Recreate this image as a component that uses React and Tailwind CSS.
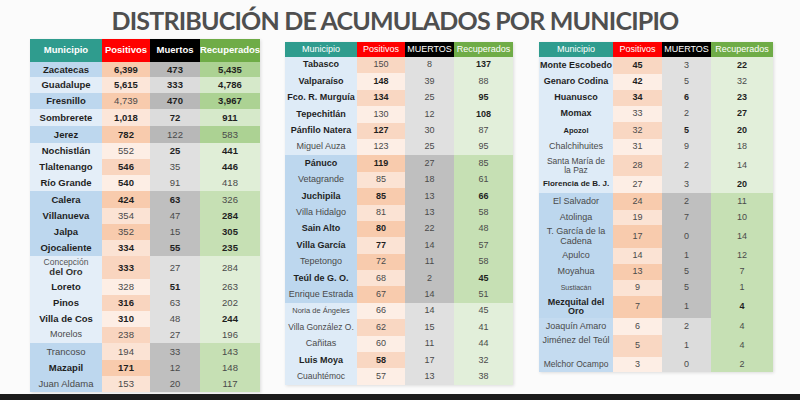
import React from 'react';
import clsx from 'clsx';

// tonos por grupo: d = oscuro, l = claro; [par, impar]
const tones = {
  d: {
    mun: ['bg-[#bdd7ee]', 'bg-[#e2edf8]'],
    pos: ['bg-[#f8cbad]', 'bg-[#fce6d9]'],
    mue: ['bg-[#b8b8b8]', 'bg-[#dcdcdc]'],
    rec: ['bg-[#acd293]', 'bg-[#d6e9ca]'],
  },
  l: {
    mun: ['bg-[#e4eef8]', 'bg-[#e4eef8]'],
    pos: ['bg-[#f9d5bf]', 'bg-[#fdeee5]'],
    mue: ['bg-[#e0e0e0]', 'bg-[#e0e0e0]'],
    rec: ['bg-[#e0eed7]', 'bg-[#e0eed7]'],
  },
  D: {
    mun: ['bg-[#bdd7ee]', 'bg-[#bdd7ee]'],
    pos: ['bg-[#f8cbad]', 'bg-[#fbe3d4]'],
    mue: ['bg-[#bfbfbf]', 'bg-[#bfbfbf]'],
    rec: ['bg-[#c6e0b4]', 'bg-[#c6e0b4]'],
  },
  L: {
    mun: ['bg-[#deebf7]', 'bg-[#deebf7]'],
    pos: ['bg-[#f9d7c2]', 'bg-[#fdeee5]'],
    mue: ['bg-[#e0e0e0]', 'bg-[#e0e0e0]'],
    rec: ['bg-[#e2efda]', 'bg-[#e2efda]'],
  },
  B: {
    mun: ['bg-[#c4dbf0]', 'bg-[#c4dbf0]'],
    pos: ['bg-[#f9d7c2]', 'bg-[#fdeee5]'],
    mue: ['bg-[#dcdcdc]', 'bg-[#dcdcdc]'],
    rec: ['bg-[#c6e0b4]', 'bg-[#c6e0b4]'],
  },
};

// [municipio, positivos, muertos, recuperados, negritas, tono, alto, clase nombre]
const tabla1 = [
  ['Zacatecas', '6,399', '473', '5,435', 'bbbb', 'd', 'h-[15px]'],
  ['Guadalupe', '5,615', '333', '4,786', 'bbbb', 'd', 'h-[16px]'],
  ['Fresnillo', '4,739', '470', '3,967', 'bnbb', 'd', 'h-[16px]'],
  ['Sombrerete', '1,018', '72', '911', 'bbbb', 'd', 'h-[17px]'],
  ['Jerez', '782', '122', '583', 'bbnn', 'd', 'h-[17px]'],
  ['Nochistlán', '552', '25', '441', 'bnbb', 'l', 'h-[16px]'],
  ['Tlaltenango', '546', '35', '446', 'bbnb', 'l', 'h-[16px]'],
  ['Río Grande', '540', '91', '418', 'bbnn', 'l', 'h-[16px]'],
  ['Calera', '424', '63', '326', 'bbbn', 'D', 'h-[17px]'],
  ['Villanueva', '354', '47', '284', 'bnnb', 'D', 'h-[16px]'],
  ['Jalpa', '352', '15', '305', 'bnnb', 'D', 'h-[16px]'],
  ['Ojocaliente', '334', '55', '235', 'bbbb', 'D', 'h-[16px]'],
  [
    <div className="flex flex-col leading-[1.05]">
      <span className="text-[8.5px] font-normal text-[#555]">Concepción</span>
      <span className="font-bold text-[#333]">del Oro</span>
    </div>,
    '333', '27', '284', 'nbnn', 'l', 'h-[23px]',
  ],
  ['Loreto', '328', '51', '263', 'bnbn', 'l', 'h-[16px]'],
  ['Pinos', '316', '63', '202', 'bbnn', 'l', 'h-[16px]'],
  ['Villa de Cos', '310', '48', '244', 'bbnb', 'l', 'h-[16px]'],
  ['Morelos', '238', '27', '196', 'nnnn', 'l', 'h-[16px]', 'text-[9px]'],
  ['Trancoso', '194', '33', '143', 'nnnn', 'D', 'h-[17px]'],
  ['Mazapil', '171', '12', '148', 'bbnn', 'D', 'h-[16px]'],
  ['Juan Aldama', '153', '20', '117', 'nnnn', 'D', 'h-[16px]'],
];

const tabla2 = [
  ['Tabasco', '150', '8', '137', 'bnnb', 'L'],
  ['Valparaíso', '148', '39', '88', 'bbnn', 'L'],
  ['Fco. R. Murguía', '134', '25', '95', 'bbnb', 'L'],
  ['Tepechitlán', '130', '12', '108', 'bnnb', 'L'],
  ['Pánfilo Natera', '127', '30', '87', 'bbnn', 'L'],
  ['Miguel Auza', '123', '25', '95', 'nnnn', 'L'],
  ['Pánuco', '119', '27', '85', 'bbnn', 'D'],
  ['Vetagrande', '85', '18', '61', 'nnnn', 'D'],
  ['Juchipila', '85', '13', '66', 'bbnb', 'D'],
  ['Villa Hidalgo', '81', '13', '58', 'nnnn', 'D'],
  ['Sain Alto', '80', '22', '48', 'bbnn', 'D'],
  ['Villa García', '77', '14', '57', 'bbnn', 'D'],
  ['Tepetongo', '72', '11', '58', 'nnnn', 'D'],
  ['Teúl de G. O.', '68', '2', '45', 'bnnb', 'D'],
  ['Enrique Estrada', '67', '14', '51', 'nnnn', 'D'],
  ['Noria de Ángeles', '66', '14', '45', 'nnnn', 'L', null, 'text-[7.5px]'],
  ['Villa González O.', '62', '15', '41', 'nnnn', 'L', null, 'text-[8.5px]'],
  ['Cañitas', '60', '11', '44', 'nnnn', 'L'],
  ['Luis Moya', '58', '17', '32', 'bbnn', 'L'],
  ['Cuauhtémoc', '57', '13', '38', 'nnnn', 'L', null, 'text-[8.5px]'],
];

const tabla3 = [
  ['Monte Escobedo', '45', '3', '22', 'bbnb', 'L', 'h-[17px]'],
  ['Genaro Codina', '42', '5', '32', 'bbnn', 'L', 'h-[16px]'],
  ['Huanusco', '34', '6', '23', 'bbbb', 'L', 'h-[16px]'],
  ['Momax', '33', '2', '27', 'bnnb', 'L', 'h-[16px]'],
  ['Apozol', '32', '5', '20', 'bnbb', 'L', 'h-[17px]', 'text-[7.5px]'],
  ['Chalchihuites', '31', '9', '18', 'nnnn', 'L', 'h-[16px]'],
  ['Santa María de la Paz', '28', '2', '14', 'nnnn', 'L', 'h-[21px]', 'text-[8.5px] px-1'],
  ['Florencia de B. J.', '27', '3', '20', 'bnnb', 'L', 'h-[17px]', 'text-[8px]'],
  ['El Salvador', '24', '2', '11', 'nnnn', 'D', 'h-[17px]'],
  ['Atolinga', '19', '7', '10', 'nnnn', 'D', 'h-[15px]'],
  ['T. García de la Cadena', '17', '0', '14', 'nnnn', 'D', 'h-[23px]', 'px-1'],
  ['Apulco', '14', '1', '12', 'nnnn', 'D', 'h-[16px]'],
  ['Moyahua', '13', '5', '7', 'nnnn', 'D', 'h-[16px]'],
  ['Sustiacán', '9', '5', '1', 'nnnn', 'D', 'h-[16px]', 'text-[7px]'],
  ['Mezquital del Oro', '7', '1', '4', 'bnnb', 'D', 'h-[22px]', 'px-2'],
  ['Joaquín Amaro', '6', '2', '4', 'nnnn', 'B', 'h-[17px]'],
  ['Jiménez del Teúl', '5', '1', '4', 'nnnn', 'B', 'h-[22px]', 'items-start pt-[1px]'],
  ['Melchor Ocampo', '3', '0', '2', 'nnnn', 'B', 'h-[15px]', 'text-[8.5px]'],
];

const Celda = ({ children, bg, bold, className }) => (
  <div
    className={clsx(
      'flex items-center justify-center text-center leading-[1.05]',
      bg,
      bold ? 'font-bold text-[#1f1f1f]' : 'text-[#4a4a4a]',
      className
    )}>
    {children}
  </div>
);

const Tabla = ({ cols, headH, rowH, headText, muertos, rows, size, striped, className }) => (
  <div className={clsx('shadow-[1px_1px_3px_rgba(0,0,0,0.12)]', className)}>
    <div className={clsx('grid', cols, headH, headText, 'text-white')}>
      <div className="flex items-center justify-center bg-[#2f9c8e]">Municipio</div>
      <div className="flex items-center justify-center bg-[#ff0000]">Positivos</div>
      <div className="flex items-center justify-center bg-black">{muertos}</div>
      <div className="flex items-center justify-center overflow-hidden whitespace-nowrap bg-[#6fac47]">Recuperados</div>
    </div>
    {rows.map((r, i) => {
      const [nombre, pos, mue, rec, neg, tono, h, nameCls] = r;
      const t = tones[tono];
      const k = i % 2;
      const s = striped ? k : 0;
      return (
        <div key={i} className={clsx('grid', cols, h || rowH, size)}>
          <Celda bg={t.mun[s]} bold={neg[0] === 'b'} className={nameCls}>
            {nombre}
          </Celda>
          <Celda bg={t.pos[k]} bold={neg[1] === 'b'}>{pos}</Celda>
          <Celda bg={t.mue[s]} bold={neg[2] === 'b'}>{mue}</Celda>
          <Celda bg={t.rec[s]} bold={neg[3] === 'b'}>{rec}</Celda>
        </div>
      );
    })}
  </div>
);

export default function App() {
  return (
    <div className="w-[800px] h-[400px] overflow-hidden flex flex-col bg-[#fbfbfb] font-['Liberation_Sans',Arial,sans-serif]">
      <h1 className="h-[39px] pt-[5px] pr-[10px] text-center text-[25px] leading-[30px] font-bold tracking-[-0.8px] text-[#4f4f4f] font-['Lato',sans-serif]">
        DISTRIBUCIÓN DE ACUMULADOS POR MUNICIPIO
      </h1>
      <div className="flex items-start pl-[30px]">
        <Tabla
          cols="grid-cols-[72px_48px_50px_60px]"
          headH="h-[23px]"
          headText="text-[9.5px] font-bold"
          muertos="Muertos"
          rows={tabla1}
          size="text-[9.5px]"
          striped
        />
        <Tabla
          className="mt-[3px] ml-[25px]"
          cols="grid-cols-[72px_48px_49px_59px]"
          headH="h-[15px]"
          rowH="h-[16.4px]"
          headText="text-[9px]"
          muertos="MUERTOS"
          rows={tabla2}
          size="text-[9px]"
        />
        <Tabla
          className="mt-[3px] ml-[26px]"
          cols="grid-cols-[74px_49px_49px_62px]"
          headH="h-[15px]"
          headText="text-[9px]"
          muertos="MUERTOS"
          rows={tabla3}
          size="text-[9px]"
        />
      </div>
      <div className="mt-auto h-[6px] bg-[#1c1c1c]" />
    </div>
  );
}
